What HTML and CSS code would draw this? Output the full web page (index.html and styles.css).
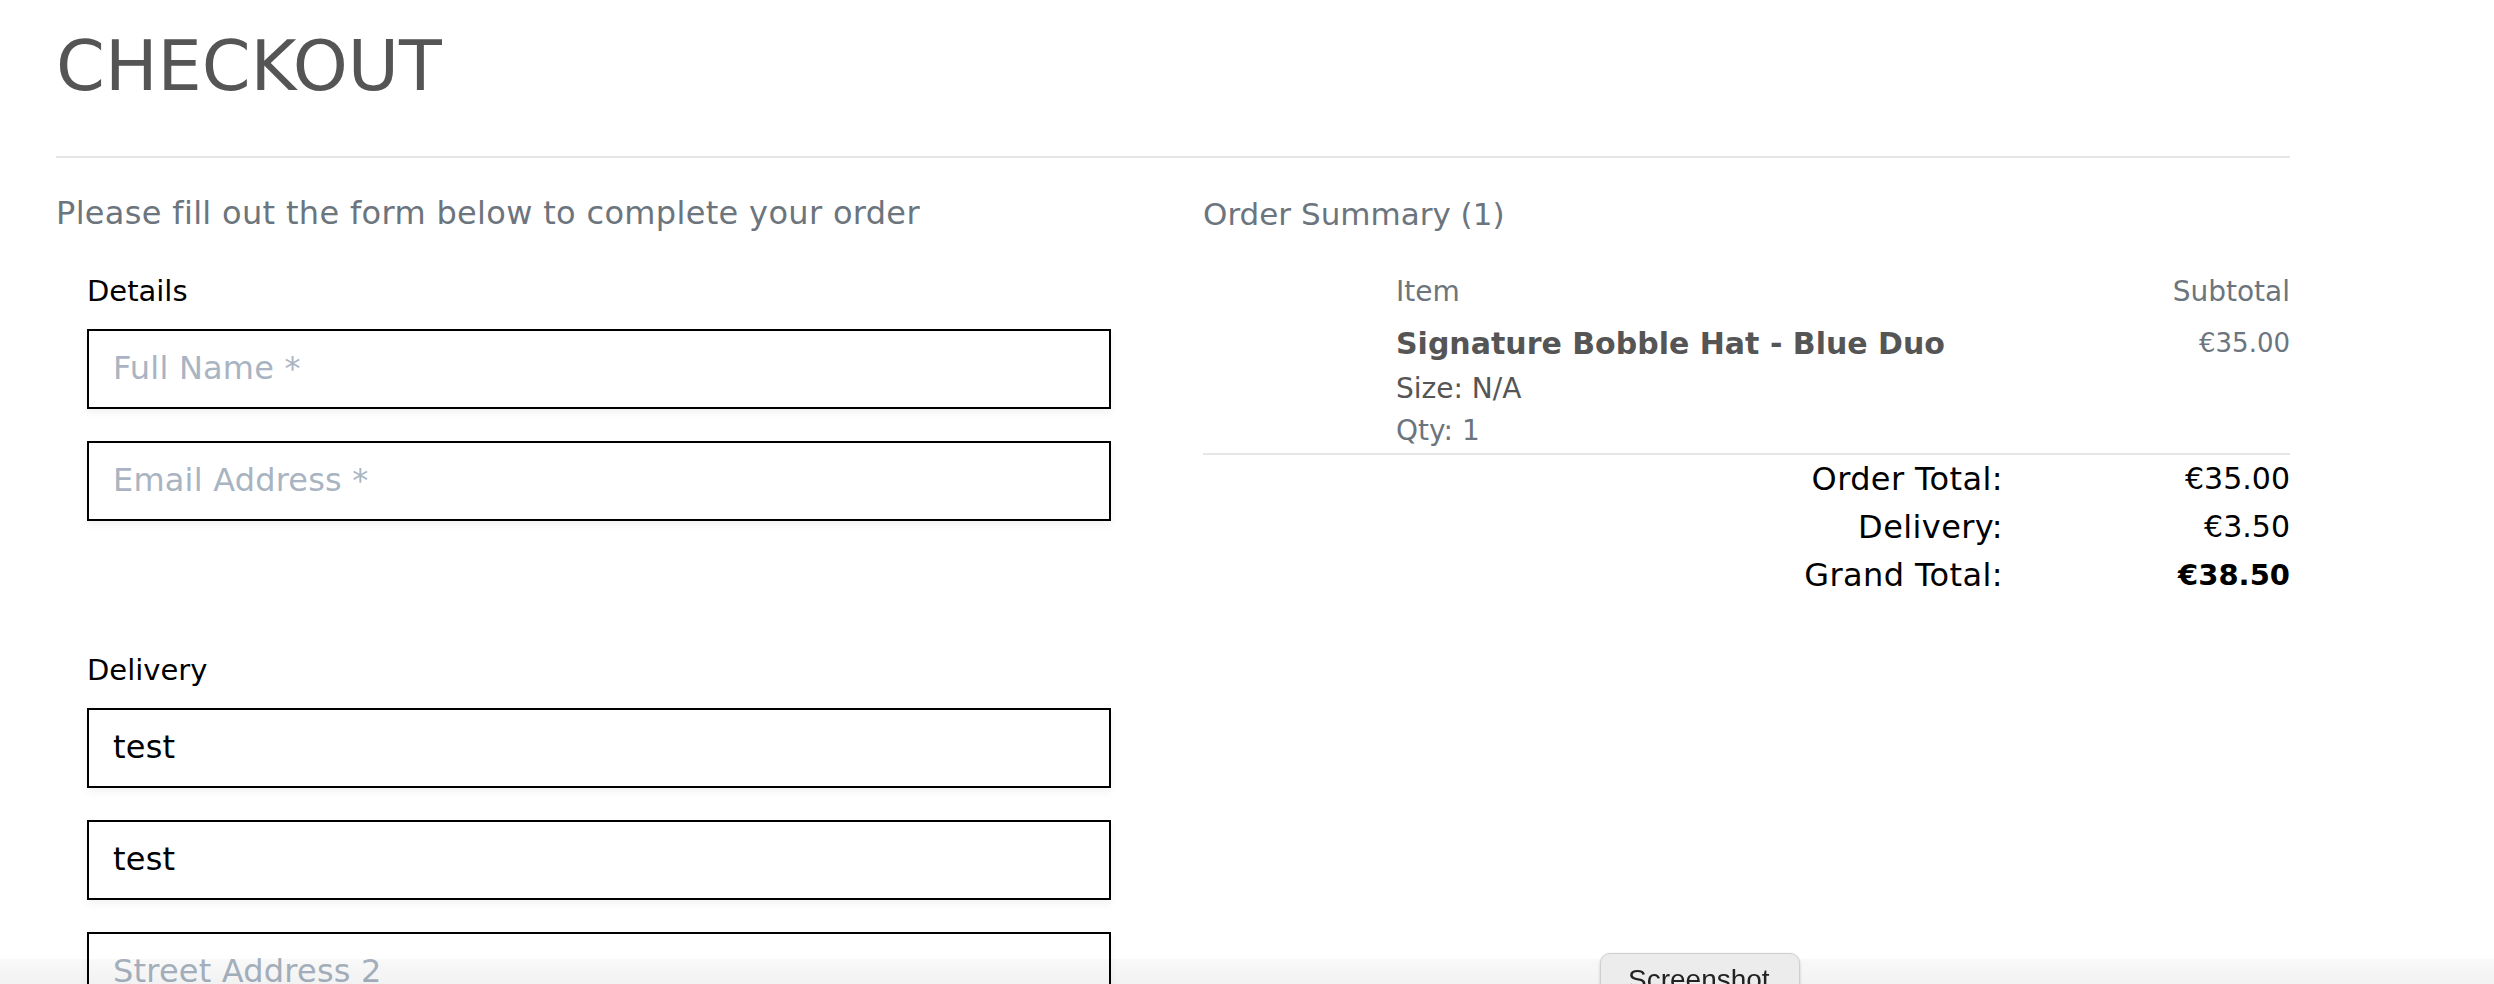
FILE: index.html
```html
<!DOCTYPE html>
<html lang="en">
<head>
<meta charset="utf-8">
<title>Checkout</title>
<link rel="stylesheet" href="styles.css">
</head>
<body>
<main class="page">
  <h1 class="title">CHECKOUT</h1>
  <hr class="rule">
  <div class="row">
    <section class="col col-form">
      <p class="lead">Please fill out the form below to complete your order</p>
      <form class="form">
        <div class="fs">
          <div class="fs-label">Details</div>
          <input class="field" type="text" placeholder="Full Name *">
          <input class="field" type="email" placeholder="Email Address *">
        </div>
        <div class="fs">
          <div class="fs-label">Delivery</div>
          <input class="field" type="text" value="test">
          <input class="field" type="text" value="test">
          <input class="field" type="text" placeholder="Street Address 2">
        </div>
      </form>
    </section>
    <section class="col col-summary">
      <h2 class="summary-title">Order Summary (1)</h2>
      <div class="items">
        <div class="item-head">
          <span></span>
          <span class="muted">Item</span>
          <span class="muted right">Subtotal</span>
        </div>
        <div class="item-row">
          <span></span>
          <div class="item-info">
            <div class="item-name">Signature Bobble Hat - Blue Duo</div>
            <div class="item-size">Size: N/A</div>
            <div class="item-qty">Qty: 1</div>
          </div>
          <span class="item-price">€35.00</span>
        </div>
      </div>
      <hr class="rule rule-sm">
      <div class="totals">
        <span class="t-label">Order Total:</span><span class="t-val">€35.00</span>
        <span class="t-label">Delivery:</span><span class="t-val">€3.50</span>
        <span class="t-label">Grand Total:</span><span class="t-val t-strong">€38.50</span>
      </div>
    </section>
  </div>
</main>
<div class="dock-shade"></div>
<button class="shot-btn" type="button">Screenshot</button>
</body>
</html>
```
FILE: styles.css
```css
html, body {
  margin: 0;
  padding: 0;
  background: #ffffff;
  overflow: hidden;
}
body {
  font-family: "DejaVu Sans", "Open Sans", sans-serif;
  color: #000;
}
.page {
  width: 2234px;
  padding: 24px 0 0 56px;
}
.title {
  margin: 0;
  font-size: 70px;
  line-height: 84px;
  font-weight: normal;
  color: #555555;
}
.rule {
  margin: 48px 0 0 0;
  border: 0;
  height: 2px;
  background: #e6e6e6;
}
.row {
  display: grid;
  grid-template-columns: 1087px 1087px;
  column-gap: 60px;
  padding-top: 36px;
}
.lead {
  margin: 0 0 42px 0;
  font-size: 32px;
  line-height: 38px;
  letter-spacing: 0.33px;
  color: #6c757d;
}
.form {
  padding: 0 32px 0 31px;
}
.fs {
  display: flex;
  flex-direction: column;
}
.fs + .fs {
  margin-top: 132px;
}
.fs-label {
  font-size: 29px;
  line-height: 35px;
  color: #000;
  margin-bottom: 20px;
}
.field {
  box-sizing: border-box;
  width: 1024px;
  height: 80px;
  margin: 0;
  padding: 0 24px 3px 24px;
  border: 2px solid #000;
  border-radius: 0;
  background: #fff;
  font-family: "DejaVu Sans", "Open Sans", sans-serif;
  font-size: 32px;
  letter-spacing: 0.2px;
  color: #000;
  box-shadow: 0 4px 8px rgba(0, 0, 0, 0.05);
  outline: none;
}
.field + .field {
  margin-top: 32px;
}
.field::placeholder {
  color: #a9b4c2;
  opacity: 1;
}
.summary-title {
  margin: 0 0 42px 0;
  padding-top: 1px;
  font-size: 31px;
  line-height: 38px;
  font-weight: normal;
  color: #6c757d;
}
.item-head,
.item-row {
  display: grid;
  grid-template-columns: 193px 1fr auto;
}
.item-head {
  font-size: 28px;
  line-height: 34px;
}
.muted {
  color: #6c757d;
}
.right {
  text-align: right;
}
.item-row {
  margin-top: 17px;
}
.item-name {
  font-size: 30px;
  line-height: 36px;
  font-weight: bold;
  color: #555555;
}
.item-size,
.item-qty {
  font-size: 28px;
  line-height: 42px;
}
.item-size {
  margin-top: 6px;
  color: #555555;
}
.item-qty {
  color: #6c757d;
}
.item-price {
  font-size: 26px;
  line-height: 34px;
  color: #6c757d;
  text-align: right;
}
.rule-sm {
  margin-top: 1px;
}
.totals {
  display: grid;
  grid-template-columns: 1fr 287px;
  line-height: 48px;
}
.t-label {
  font-size: 32px;
  letter-spacing: 0.4px;
  text-align: right;
  color: #000;
}
.t-val {
  font-size: 30px;
  text-align: right;
  color: #000;
}
.t-strong {
  font-weight: bold;
  font-size: 29px;
}
.dock-shade {
  position: fixed;
  left: 0;
  right: 0;
  bottom: 0;
  height: 25px;
  background: linear-gradient(to bottom, rgba(0, 0, 0, 0.025), rgba(0, 0, 0, 0.05));
  pointer-events: none;
}
.shot-btn {
  position: fixed;
  left: 1600px;
  top: 953px;
  width: 200px;
  padding: 10px 0 20px 27px;
  text-align: left;
  display: block;
  border: 1px solid #cfcfcf;
  border-radius: 10px;
  background: #ececec;
  box-shadow: 0 1px 3px rgba(0, 0, 0, 0.18);
  font-family: "Liberation Sans", Arial, sans-serif;
  font-size: 28px;
  line-height: 32px;
  color: #222;
  box-sizing: border-box;
}
```
